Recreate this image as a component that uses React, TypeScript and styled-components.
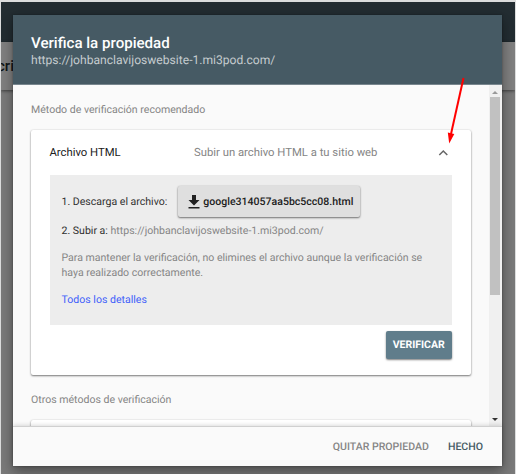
import React from 'react';
import styled, { createGlobalStyle } from 'styled-components';

const GlobalStyle = createGlobalStyle`
  * { box-sizing: border-box; }
  body { margin: 0; overflow: hidden; font-family: Roboto, "Liberation Sans", sans-serif; text-rendering: geometricPrecision; }
  button { text-rendering: geometricPrecision; }
`;

const Page = styled.div`
  position: relative;
  width: 516px;
  height: 474px;
  padding: 2px 1.5px 0 1px;
  overflow: hidden;
  background: #dcdddd;
`;

const Backdrop = styled.div`
  height: 472px;
  overflow: hidden;
  background: #7a7a7a;
`;

const AppBar = styled.div`
  height: 40px;
  background: #232d32;
`;

const SubBar = styled.div`
  height: 48px;
  background: #808080;
  box-shadow: 0 1px 3px rgba(0, 0, 0, 0.5);
  color: #111517;
  font-size: 15px;
  font-weight: 500;
  line-height: 48px;
  text-indent: -4px;
`;

const Dialog = styled.section`
  position: absolute;
  left: 13px;
  top: 15px;
  width: 488.5px;
  height: 451px;
  display: flex;
  flex-direction: column;
  background: #fafafa;
  box-shadow: 0 8px 12px rgba(0, 0, 0, 0.22), 0 2px 12px rgba(0, 0, 0, 0.2), 0 0 2px rgba(0, 0, 0, 0.3);
`;

const Header = styled.header`
  flex: 0 0 70px;
  padding: 18px 18px 0;
  background: #465a64;
  border-bottom: 1px solid #78868e;
`;

const Title = styled.h1`
  margin: 0;
  color: #fff;
  font-size: 15.1px;
  font-weight: 500;
  line-height: 20px;
`;

const Site = styled.div`
  color: #c5cccf;
  font-size: 12.1px;
  line-height: 15px;
`;

const Body = styled.div`
  flex: 1;
  min-height: 0;
  display: flex;
`;

const Content = styled.div`
  flex: 1;
  min-width: 0;
  overflow: hidden;
  padding: 17px 18.5px 0 18px;
`;

const SectionLabel = styled.div`
  height: 16px;
  color: #858585;
  font-size: 10.56px;
  line-height: 16px;
`;

const Card = styled.div`
  height: 245px;
  margin: 12px 0 17px;
  padding: 0 18.5px;
  border-radius: 2px;
  background: #fff;
  box-shadow: 0 1px 2px rgba(0, 0, 0, 0.5), 0 0 2px rgba(0, 0, 0, 0.12);
`;

const CardHead = styled.div`
  display: grid;
  grid-template-columns: 144.5px 1fr 18px;
  align-items: center;
  height: 45px;
`;

const Method = styled.span`
  color: #212121;
  font-size: 11.3px;
`;

const Summary = styled(Method)`
  color: #858585;
`;

const Panel = styled.div`
  height: 150px;
  padding: 11px 12px 0;
  background: #ededed;
  color: #858585;
  font-size: 10.56px;
`;

const Step = styled.div`
  display: flex;
  align-items: center;
  height: 31px;
  color: #303030;
  white-space: pre;
`;

const UploadStep = styled(Step)`
  height: 16px;
  margin-top: 5px;
`;

const Muted = styled.span`
  color: #858585;
`;

const DownloadButton = styled.button`
  display: flex;
  align-items: center;
  gap: 3px;
  width: 182px;
  height: 31px;
  margin: 0 0 0 11px;
  padding: 0 0 0 10px;
  border: 0;
  border-radius: 2px;
  background: #dfdfdf;
  box-shadow: 0 1px 2px rgba(0, 0, 0, 0.5), 0 0 2px rgba(0, 0, 0, 0.12);
  color: #212121;
  font: 500 10.56px Roboto, sans-serif;
`;

const Note = styled.p`
  margin: 12px 0;
  line-height: 15px;
  white-space: nowrap;
`;

const Details = styled.a`
  display: block;
  color: #3f5ffa;
  line-height: 15px;
`;

const CardActions = styled.div`
  display: flex;
  justify-content: flex-end;
  padding-top: 6px;
`;

const VerifyButton = styled.button`
  width: 66.5px;
  height: 27.5px;
  padding: 0;
  border: 0;
  border-radius: 2px;
  background: #607d8b;
  box-shadow: 0 1px 2px rgba(0, 0, 0, 0.5);
  color: #fff;
  font: 700 10.5px Roboto, sans-serif;
`;

const Scrollbar = styled.div`
  display: flex;
  flex-direction: column;
  align-items: center;
  width: 12.5px;
  padding: 6px 0 5px;
  background: #f0f0f0;
`;

const Thumb = styled.div`
  width: 10px;
  height: 198px;
  margin: 3px 0 auto;
  background: #c1c1c1;
`;

const Footer = styled.footer`
  position: relative;
  flex: 0 0 40px;
  display: flex;
  justify-content: flex-end;
  align-items: center;
  gap: 19px;
  padding-right: 18.5px;
  background: #fafafa;
  border-top: 1px solid #d0d0d0;
  box-shadow: 0 -1px 4px rgba(0, 0, 0, 0.14);
`;

const FooterButton = styled.button<{ $primary?: boolean }>`
  padding: 0;
  border: 0;
  background: none;
  color: ${(p) => (p.$primary ? '#455a64' : '#858585')};
  font: 500 10.56px Roboto, sans-serif;
`;

const Pointer = styled.svg`
  position: absolute;
  left: 440px;
  top: 70px;
`;

export default function App() {
  return (
    <Page>
      <GlobalStyle />
      <Backdrop>
        <AppBar />
        <SubBar>cri</SubBar>
      </Backdrop>
      <Dialog>
        <Header>
          <Title>Verifica la propiedad</Title>
          <Site>https://johbanclavijoswebsite-1.mi3pod.com/</Site>
        </Header>
        <Body>
          <Content>
            <SectionLabel>Método de verificación recomendado</SectionLabel>
            <Card>
              <CardHead>
                <Method>Archivo HTML</Method>
                <Summary>Subir un archivo HTML a tu sitio web</Summary>
                <svg width="18" height="18" viewBox="0 0 18 18" fill="none" stroke="#666" strokeWidth="1.5">
                  <path d="M5.3 11 9.3 7l4 4" />
                </svg>
              </CardHead>
              <Panel>
                <Step>
                  1. Descarga el archivo:
                  <DownloadButton>
                    <svg width="12" height="14" viewBox="0 0 12 14" fill="#212121">
                      <path d="M4 0h4v5h3.5L6 10.5.5 5H4zM.5 12h11v1.5H.5z" />
                    </svg>
                    google314057aa5bc5cc08.html
                  </DownloadButton>
                </Step>
                <UploadStep>
                  {'2. Subir a: '}
                  <Muted>https://johbanclavijoswebsite-1.mi3pod.com/</Muted>
                </UploadStep>
                <Note>
                  Para mantener la verificación, no elimines el archivo aunque la verificación se
                  <br />
                  haya realizado correctamente.
                </Note>
                <Details>Todos los detalles</Details>
              </Panel>
              <CardActions>
                <VerifyButton>VERIFICAR</VerifyButton>
              </CardActions>
            </Card>
            <SectionLabel>Otros métodos de verificación</SectionLabel>
            <Card />
          </Content>
          <Scrollbar>
            <svg width="6" height="3" viewBox="0 0 6 3" fill="#999"><path d="M0 3 3 0l3 3z" /></svg>
            <Thumb />
            <svg width="6" height="3" viewBox="0 0 6 3" fill="#333"><path d="M0 0h6L3 3z" /></svg>
          </Scrollbar>
        </Body>
        <Footer>
          <FooterButton>QUITAR PROPIEDAD</FooterButton>
          <FooterButton $primary>HECHO</FooterButton>
        </Footer>
      </Dialog>
      <Pointer width="30" height="80" viewBox="0 0 30 80">
        <path d="M23.5 8 11 64" stroke="#f00" strokeWidth="2" fill="none" />
        <path d="M7.8 62.5 14.3 64 9.2 73.5z" fill="#f00" />
      </Pointer>
    </Page>
  );
}
